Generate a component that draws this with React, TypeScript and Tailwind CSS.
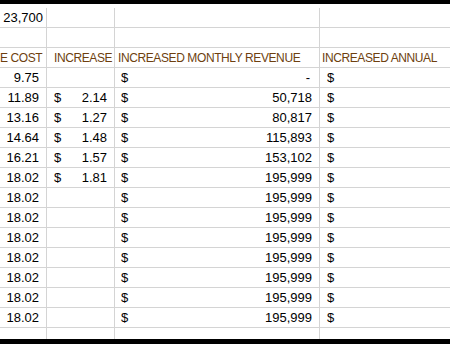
const rows: { cost: string; inc?: string; rev: string }[] = [
  { cost: "9.75", rev: "-" },
  { cost: "11.89", inc: "2.14", rev: "50,718" },
  { cost: "13.16", inc: "1.27", rev: "80,817" },
  { cost: "14.64", inc: "1.48", rev: "115,893" },
  { cost: "16.21", inc: "1.57", rev: "153,102" },
  { cost: "18.02", inc: "1.81", rev: "195,999" },
  { cost: "18.02", rev: "195,999" },
  { cost: "18.02", rev: "195,999" },
  { cost: "18.02", rev: "195,999" },
  { cost: "18.02", rev: "195,999" },
  { cost: "18.02", rev: "195,999" },
  { cost: "18.02", rev: "195,999" },
  { cost: "18.02", rev: "195,999" },
];

const cols = "grid grid-cols-[47px_68px_205px_1fr]";
const cell = "h-[20px] border-b border-r border-[#d4d4d4] flex items-center overflow-hidden whitespace-nowrap";
const head = "text-[12px] tracking-[-0.4px] text-[#6e3f0f]";

export default function App() {
  return (
    <div className="w-[450px] h-[344px] bg-white overflow-hidden flex flex-col text-[13px] text-black" style={{ fontFamily: '"Liberation Sans", Arial, sans-serif' }}>
      <div className="h-[4px] bg-black shrink-0" />
      <div className="h-[4px] shrink-0" />
      <div className="flex-1 overflow-hidden">
        <div className={cols}>
          <div className={`${cell} justify-end pr-[3px]`}>23,700</div>
          <div className={cell} />
          <div className={cell} />
          <div className={`${cell} border-r-0`} />

          <div className={cell} />
          <div className={cell} />
          <div className={cell} />
          <div className={`${cell} border-r-0`} />

          <div className={`${cell} ${head}`}>E COST</div>
          <div className={`${cell} ${head} pl-[7px]`}>INCREASE</div>
          <div className={`${cell} ${head} pl-[3px]`}>INCREASED MONTHLY REVENUE</div>
          <div className={`${cell} ${head} border-r-0 pl-[2px]`}>INCREASED ANNUAL</div>

          {rows.map((r, i) => (
            <div key={i} className="contents">
              <div className={`${cell} justify-end pr-[7px]`}>{r.cost}</div>
              <div className={`${cell} justify-between px-[7px]`}>
                {r.inc && (
                  <>
                    <span>$</span>
                    <span>{r.inc}</span>
                  </>
                )}
              </div>
              <div className={`${cell} justify-between pl-[6px] pr-[7px]`}>
                <span>$</span>
                <span className={r.rev === "-" ? "pr-[2px]" : ""}>{r.rev}</span>
              </div>
              <div className={`${cell} border-r-0 pl-[7px]`}>$</div>
            </div>
          ))}

          <div className={cell} />
          <div className={cell} />
          <div className={cell} />
          <div className={`${cell} border-r-0`} />
        </div>
      </div>
      <div className="h-[5px] bg-black shrink-0" />
    </div>
  );
}
